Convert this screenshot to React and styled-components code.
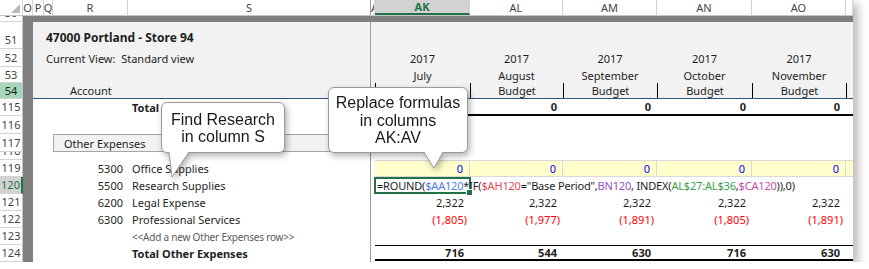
import styled, { createGlobalStyle, css } from "styled-components";

const GREEN = "#217346";
const GRID = "#d4d4d4";
const SHADE = "#f2f2f2";
const DARK = "#7f7f7f";
const FROZEN = "#9b9b9b";

const COLS = [
  { key: "AK", w: 95 },
  { key: "AL", w: 93 },
  { key: "AM", w: 94 },
  { key: "AN", w: 95 },
  { key: "AO", w: 94 },
];
const EDGE_W = 7;

const GlobalStyle = createGlobalStyle`
  body {
    margin: 0;
    background: #fff;
    font-family: "Noto Sans", "Open Sans", sans-serif;
  }
`;

const Shot = styled.div`
  position: relative;
  width: 853px;
  height: 262px;
  overflow: hidden;
  background: #fff;
  box-shadow: 5px 4px 9px rgba(0, 0, 0, 0.28);
  font-size: 11px;
  color: #1e1e1e;
`;

const HeadRow = styled.div`
  display: flex;
  height: 16px;
  box-sizing: border-box;
  border-bottom: 1px solid #c6c6c6;
  background: #fff;
`;

const Corner = styled.div`
  position: relative;
  width: 23px;
  flex: none;
  box-sizing: border-box;
  border-right: 1px solid ${GRID};

  &::after {
    content: "";
    position: absolute;
    right: 2px;
    bottom: 2px;
    border-left: 9px solid transparent;
    border-bottom: 9px solid #b9b9b9;
  }
`;

const ColHead = styled.div`
  width: ${({ $w }) => $w}px;
  flex: none;
  box-sizing: border-box;
  display: flex;
  align-items: center;
  justify-content: ${({ $left }) => ($left ? "flex-start" : "center")};
  overflow: hidden;
  color: #444;
  border-right: 1px solid ${({ $frozen }) => ($frozen ? FROZEN : GRID)};

  ${({ $active }) =>
    $active &&
    css`
      background: #d2d2d2;
      color: ${GREEN};
      font-weight: 700;
      border-bottom: 2px solid ${GREEN};
    `}
`;

const Row = styled.div`
  display: flex;
  height: ${({ $h }) => $h}px;
`;

const RowHead = styled.div`
  width: 23px;
  flex: none;
  box-sizing: border-box;
  display: flex;
  justify-content: center;
  align-items: ${({ $end }) => ($end ? "flex-end" : "center")};
  padding-bottom: ${({ $end }) => ($end ? 1 : 0)}px;
  overflow: hidden;
  line-height: 14px;
  color: #444;
  background: #fff;
  border-right: 1px solid #c6c6c6;
  border-bottom: 1px solid ${GRID};

  ${({ $hilite }) =>
    $hilite &&
    css`
      background: #a4d8bb;
      color: #1e1e1e;
    `}

  ${({ $active }) =>
    $active &&
    css`
      background: #d2d2d2;
      color: ${GREEN};
      border-right: 2px solid ${GREEN};
    `}
`;

const Gutter = styled.div`
  width: 10px;
  flex: none;
  background: ${DARK};
`;

const DarkBand = styled.div`
  flex: 1;
  background: ${DARK};
`;

const Body = styled.div`
  flex: 1;
  display: flex;
  min-width: 0;
  box-sizing: border-box;
  background: ${({ $shade }) => ($shade ? SHADE : "#fff")};
  border-bottom: ${({ $rule }) => $rule || "none"};
`;

const LeftPane = styled.div`
  width: 338px;
  flex: none;
  box-sizing: border-box;
  display: grid;
  grid-template-columns: 20px 75px 1fr;
  align-items: ${({ $end }) => ($end ? "end" : "center")};
  padding-bottom: ${({ $end }) => ($end ? 3 : 0)}px;
  border-right: 1px solid ${FROZEN};
`;

const Gap = styled.div`
  width: 4px;
  flex: none;
`;

const Text = styled.div`
  grid-column: ${({ $col }) => $col || "auto"};
  padding-left: ${({ $pad }) => $pad || 0}px;
  padding-right: ${({ $padR }) => $padR || 0}px;
  text-align: ${({ $right }) => ($right ? "right" : "left")};
  white-space: nowrap;
  font-size: ${({ $size }) => $size || 11}px;
  font-weight: ${({ $bold }) => ($bold ? 700 : 400)};
  color: ${({ $muted }) => ($muted ? "#5a5a5a" : "inherit")};
  letter-spacing: ${({ $tight }) => ($tight ? "-0.2px" : "normal")};
`;

const SectionBox = styled.div`
  grid-column: 2 / -1;
  height: 18px;
  box-sizing: border-box;
  display: flex;
  align-items: center;
  padding-left: 10px;
  margin-right: 1px;
  background: ${SHADE};
  border: 1px solid #a6a6a6;
`;

const Cell = styled.div`
  width: ${({ $w }) => $w}px;
  flex: none;
  box-sizing: border-box;
  display: flex;
  align-items: center;
  justify-content: ${({ $center }) => ($center ? "center" : "flex-end")};
  padding-right: ${({ $center, $paren }) => ($center ? 0 : $paren ? 3 : 6)}px;
  white-space: nowrap;
  font-weight: ${({ $bold }) => ($bold ? 700 : 400)};
  color: ${({ $color }) => $color || "inherit"};
  background: ${({ $fill }) => $fill || "transparent"};
  border-left: ${({ $divider }) => ($divider ? "1px solid #000" : "none")};
  border-right: ${({ $grid }) => ($grid ? "1px solid #d9d9d9" : "none")};
  border-top: ${({ $top }) => $top || "none"};
  border-bottom: ${({ $bottom }) => $bottom || "none"};
  margin-bottom: ${({ $lift }) => $lift || 0}px;
`;

const ActiveCell = styled.div`
  position: relative;
  width: 97px;
  margin-left: -1px;
  flex: none;
  box-sizing: border-box;
  display: flex;
  align-items: center;
  padding-left: 1px;
  border: 2px solid ${GREEN};
  white-space: nowrap;
  letter-spacing: -0.18px;
  overflow: visible;
  z-index: 2;

  &::after {
    content: "";
    position: absolute;
    right: -4px;
    bottom: -4px;
    width: 5px;
    height: 5px;
    background: ${GREEN};
    border: 1px solid #fff;
  }
`;

const Ref = styled.span`
  color: ${({ $c }) => $c};
`;

const Callout = styled.div`
  position: absolute;
  left: ${({ $x }) => $x}px;
  top: ${({ $y }) => $y}px;
  width: ${({ $w }) => $w}px;
  height: ${({ $h }) => $h}px;
  box-sizing: border-box;
  padding-top: ${({ $pad }) => $pad}px;
  background: #fff;
  border: 1px solid #9a9a9a;
  border-radius: 6px;
  filter: drop-shadow(2px 3px 3px rgba(0, 0, 0, 0.3));
  font-family: "Liberation Sans", Arial, sans-serif;
  font-size: 16px;
  line-height: ${({ $lh }) => $lh}px;
  color: #1a1a1a;
  text-align: center;
  z-index: 5;
`;

const Tail = styled.svg`
  position: absolute;
  top: 100%;
  left: ${({ $x }) => $x}px;
  overflow: visible;
`;

function CalloutTail({ x, w, h, tip }) {
  return (
    <Tail $x={x} width={w} height={h} viewBox={`0 0 ${w} ${h}`}>
      <polygon points={`0,-1 ${tip},${h} ${w},-1`} fill="#fff" />
      <polyline
        points={`0,0.5 ${tip},${h} ${w},0.5`}
        fill="none"
        stroke="#9a9a9a"
        strokeWidth="1"
      />
    </Tail>
  );
}

function ValueCells({ values = [], edge = {}, ...props }) {
  return (
    <>
      {COLS.map((c, i) => {
        const v = values[i] || "";
        return (
          <Cell key={c.key} $w={c.w} $paren={v.startsWith("(")} {...props}>
            {v}
          </Cell>
        );
      })}
      <Cell $w={EDGE_W} {...props} {...edge} />
    </>
  );
}

const formula = [
  ["=ROUND(", null],
  ["$AA120", "#4f7fdc"],
  ["*IF(", null],
  ["$AH120", "#e8485c"],
  ['="Base Period",', null],
  ["BN120", "#8e4fc4"],
  [", INDEX(", null],
  ["AL$27:AL$36", "#3a9e4f"],
  [",", null],
  ["$CA120", "#c04fa6"],
  [")),0)", null],
];

const months = ["July", "August", "September", "October", "November"];

function App() {
  return (
    <>
      <GlobalStyle />
      <Shot>
        <HeadRow>
          <Corner />
          <ColHead $w={10}>O</ColHead>
          <ColHead $w={11}>P</ColHead>
          <ColHead $w={9}>Q</ColHead>
          <ColHead $w={75}>R</ColHead>
          <ColHead $w={243} $frozen>
            S
          </ColHead>
          <ColHead $w={4} $left>
            A
          </ColHead>
          {COLS.map((c, i) => (
            <ColHead key={c.key} $w={c.w} $active={i === 0}>
              {c.key}
            </ColHead>
          ))}
          <ColHead $w={EDGE_W} />
        </HeadRow>

        <Row $h={6}>
          <RowHead $end>50</RowHead>
          <DarkBand />
        </Row>

        <Row $h={27}>
          <RowHead $end>51</RowHead>
          <Gutter />
          <Body $shade>
            <LeftPane $end>
              <Text $col="1 / -1" $pad={13} $size={12} $bold>
                47000 Portland - Store 94
              </Text>
            </LeftPane>
          </Body>
        </Row>

        <Row $h={18}>
          <RowHead>52</RowHead>
          <Gutter />
          <Body $shade>
            <LeftPane>
              <Text $col="1 / -1" $pad={13}>
                Current View:&nbsp; Standard view
              </Text>
            </LeftPane>
            <Gap />
            <ValueCells values={months.map(() => "2017")} $center />
          </Body>
        </Row>

        <Row $h={16}>
          <RowHead>53</RowHead>
          <Gutter />
          <Body $shade>
            <LeftPane />
            <Gap />
            <ValueCells values={months} $center />
          </Body>
        </Row>

        <Row $h={16}>
          <RowHead $hilite>54</RowHead>
          <Gutter />
          <Body $shade $rule="1px solid #2f4f7f">
            <LeftPane>
              <Text $col="1 / -1" $pad={37}>
                Account
              </Text>
            </LeftPane>
            <Gap />
            <ValueCells
              values={months.map(() => "Budget")}
              $center
              $divider
            />
          </Body>
        </Row>

        <Row $h={17}>
          <RowHead>115</RowHead>
          <Gutter />
          <Body>
            <LeftPane>
              <Text $col="3" $pad={4} $bold>
                Total
              </Text>
            </LeftPane>
            <Gap />
            <ValueCells
              values={["0", "0", "0", "0", "0"]}
              $bold
              $bottom="2px solid #000"
            />
          </Body>
        </Row>

        <Row $h={18}>
          <RowHead>116</RowHead>
          <Gutter />
          <Body>
            <LeftPane />
          </Body>
        </Row>

        <Row $h={18}>
          <RowHead>117</RowHead>
          <Gutter />
          <Body>
            <LeftPane>
              <SectionBox>Other Expenses</SectionBox>
            </LeftPane>
          </Body>
        </Row>

        <Row $h={8}>
          <RowHead $end>118</RowHead>
          <Gutter />
          <Body>
            <LeftPane />
          </Body>
        </Row>

        <Row $h={17}>
          <RowHead>119</RowHead>
          <Gutter />
          <Body>
            <LeftPane>
              <Text $col="2" $right $padR={5}>
                5300
              </Text>
              <Text $col="3" $pad={4}>
                Office Supplies
              </Text>
            </LeftPane>
            <Gap />
            <ValueCells
              values={["0", "0", "0", "0", "0"]}
              $color="#0000ff"
              $fill="#ffffcc"
              $grid
              $top="1px solid #d9d9d9"
              $bottom="1px solid #d9d9d9"
              edge={{ $grid: false }}
            />
          </Body>
        </Row>

        <Row $h={17}>
          <RowHead $active>120</RowHead>
          <Gutter />
          <Body>
            <LeftPane>
              <Text $col="2" $right $padR={5}>
                5500
              </Text>
              <Text $col="3" $pad={4}>
                Research Supplies
              </Text>
            </LeftPane>
            <Gap />
            <ActiveCell>
              {formula.map(([t, c], i) =>
                c ? (
                  <Ref key={i} $c={c}>
                    {t}
                  </Ref>
                ) : (
                  <span key={i}>{t}</span>
                )
              )}
            </ActiveCell>
          </Body>
        </Row>

        <Row $h={17}>
          <RowHead>121</RowHead>
          <Gutter />
          <Body>
            <LeftPane>
              <Text $col="2" $right $padR={5}>
                6200
              </Text>
              <Text $col="3" $pad={4}>
                Legal Expense
              </Text>
            </LeftPane>
            <Gap />
            <ValueCells values={months.map(() => "2,322")} />
          </Body>
        </Row>

        <Row $h={17}>
          <RowHead>122</RowHead>
          <Gutter />
          <Body>
            <LeftPane>
              <Text $col="2" $right $padR={5}>
                6300
              </Text>
              <Text $col="3" $pad={4}>
                Professional Services
              </Text>
            </LeftPane>
            <Gap />
            <ValueCells
              values={["(1,805)", "(1,977)", "(1,891)", "(1,805)", "(1,891)"]}
              $color="#ff0000"
            />
          </Body>
        </Row>

        <Row $h={17}>
          <RowHead>123</RowHead>
          <Gutter />
          <Body>
            <LeftPane>
              <Text $col="3" $pad={4} $size={10} $muted $tight>
                &lt;&lt;Add a new Other Expenses row&gt;&gt;
              </Text>
            </LeftPane>
          </Body>
        </Row>

        <Row $h={17}>
          <RowHead>124</RowHead>
          <Gutter />
          <Body>
            <LeftPane>
              <Text $col="3" $pad={4} $bold>
                Total Other Expenses
              </Text>
            </LeftPane>
            <Gap />
            <ValueCells
              values={["716", "544", "630", "716", "630"]}
              $bold
              $top="1px solid #000"
              $bottom="2px solid #000"
              $lift={1}
            />
          </Body>
        </Row>

        <Callout $x={161} $y={102} $w={124} $h={51} $pad={8} $lh={17}>
          Find Research
          <br />
          in column S
          <CalloutTail x={7} w={20} h={25} tip={3} />
        </Callout>

        <Callout $x={328} $y={87} $w={140} $h={66} $pad={6} $lh={17.5}>
          Replace formulas
          <br />
          in columns
          <br />
          AK:AV
          <CalloutTail x={95} w={19} h={16} tip={10} />
        </Callout>
      </Shot>
    </>
  );
}

export default App;
